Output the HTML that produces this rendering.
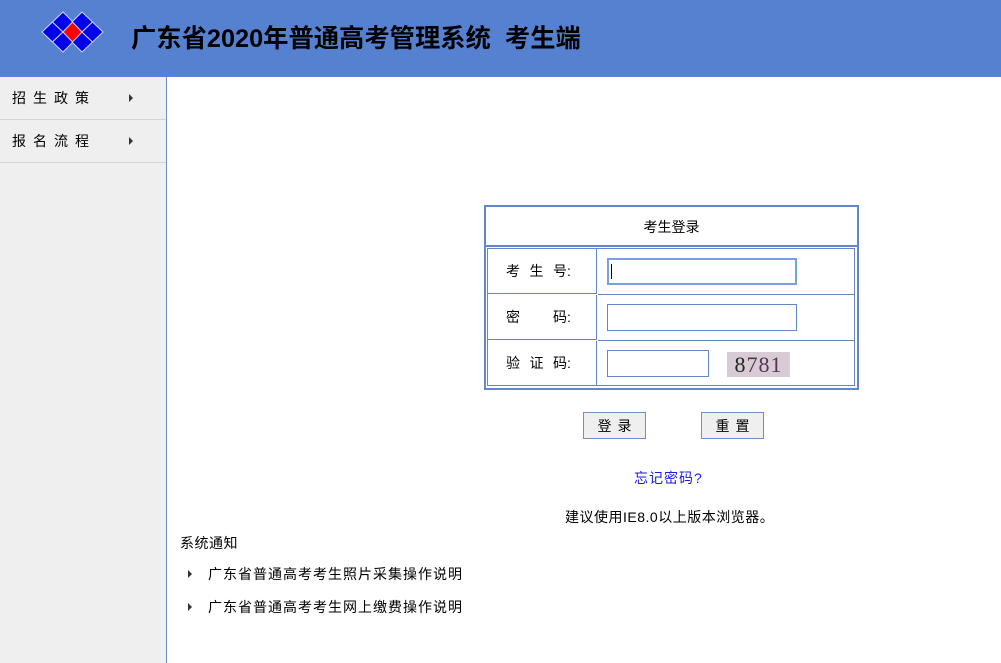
<!DOCTYPE html>
<html><head><meta charset="utf-8"><style>
body{margin:0;width:1001px;height:663px;overflow:hidden;background:#fff;font-family:"Liberation Sans","Noto Sans CJK SC",sans-serif;font-size:13px;color:#000;position:relative}
.hd{position:absolute;left:0;top:0;width:1001px;height:77px;background:#5581d0}
.hd .t{position:absolute;left:131px;top:19px;font-size:25.3px;font-weight:bold;color:#000;white-space:nowrap}
.sb{position:absolute;left:0;top:77px;width:166px;height:586px;background:#efefef;border-right:1px solid #6f8fc8}
.mi{height:42px;border-bottom:1px solid #d4d4d4;line-height:42px;padding-left:12px;letter-spacing:7px;font-size:14px;position:relative}
.mi:after{content:"";position:absolute;left:129px;top:17px;border-left:4px solid #333;border-top:4px solid transparent;border-bottom:4px solid transparent}
.box{position:absolute;left:484px;top:205px;width:371px;height:181px;border:2px solid #6286c8}
.ttl{position:absolute;left:0;top:0;width:371px;height:38px;border-bottom:2px solid #6286c8;text-align:center;line-height:40px;font-size:14px}
.in{position:absolute;left:1px;top:41px;width:366px;height:136px;border:1px solid #6286c8}
.lab{position:absolute;left:0;width:109px;height:45px;border-right:1px solid #6286c8;border-bottom:1px solid #6286c8;line-height:45px;font-size:14px;padding-left:18px;box-sizing:border-box;white-space:nowrap}
.lab i{display:inline-block;font-style:normal;width:23.5px}
.hl{position:absolute;left:110px;width:256px;border-top:1px solid #6286c8}
.ip{position:absolute;height:24px;border:1px solid #6286c8;box-sizing:border-box;background:#fff}
.btn{position:absolute;top:412px;width:63px;height:27px;border:1px solid #6f8fc8;background:#efefef;box-sizing:border-box;text-align:center;line-height:26px;font-size:14px;letter-spacing:6px;text-indent:6px}
.li{position:absolute;left:188px;font-size:14px;letter-spacing:1px}
.li:before{content:"";display:inline-block;border-left:4px solid #333;border-top:4px solid transparent;border-bottom:4px solid transparent;margin-right:16px;vertical-align:1px}
</style></head><body>
<div class="hd">
<svg width="120" height="60" style="position:absolute;left:0;top:1px">
<g stroke="#c8d4f0" stroke-width="1">
<polygon points="42,31 52.5,21 63,31 52.5,41" fill="#0000ee"/>
<polygon points="52.5,21 63,11 73,21 63,31" fill="#0000ee"/>
<polygon points="52.5,41 63,31 73,41 63,51" fill="#0000ee"/>
<polygon points="72,21 82,11 92.5,21 82,31" fill="#0000ee"/>
<polygon points="72,41 82,31 92.5,41 82,51" fill="#0000ee"/>
<polygon points="82,31 92.5,21 103,31 92.5,41" fill="#0000ee"/>
<polygon points="63,31 72.5,21 82,31 72.5,41" fill="#ff0000"/>
</g></svg>
<div class="t">广东省2020年普通高考管理系统&nbsp; 考生端</div>
</div>
<div class="sb"><div class="mi">招生政策</div><div class="mi">报名流程</div></div>
<div class="box">
<div class="ttl">考生登录</div>
<div class="in">
<div class="lab" style="top:0"><i>考</i><i>生</i>号:</div>
<div class="lab" style="top:46px"><i>密</i><i></i>码:</div>
<div class="lab" style="top:92px;height:44px;border-bottom:none"><i>验</i><i>证</i>码:</div>
<div class="hl" style="top:45px"></div>
<div class="hl" style="top:91px"></div>
<div class="ip" style="left:119px;top:9px;width:190px;height:27px;border:2px solid #7a9ee0"><div style="position:absolute;left:2px;top:4px;width:1px;height:15px;background:#000"></div></div>
<div class="ip" style="left:119px;top:55px;width:190px;height:27px"></div>
<div class="ip" style="left:119px;top:101px;width:102px;height:27px"></div>
<div style="position:absolute;left:239px;top:103px;width:63px;height:25px;background:#d8ccd4;font-family:'Liberation Serif',serif;font-size:22px;line-height:25px;text-align:center;color:#553355;letter-spacing:1px"><span style="color:#222">8</span>781</div>
</div></div>
<div class="btn" style="left:583px">登录</div>
<div class="btn" style="left:701px">重置</div>
<div style="position:absolute;left:634px;top:468px;color:#1a1ae0;font-size:14px;letter-spacing:1px">忘记密码?</div>
<div style="position:absolute;left:565px;top:507px;font-size:14px;letter-spacing:0.5px">建议使用IE8.0以上版本浏览器。</div>
<div style="position:absolute;left:180px;top:533px;font-size:14px;letter-spacing:0.5px">系统通知</div>
<div class="li" style="top:564px">广东省普通高考考生照片采集操作说明</div>
<div class="li" style="top:597px">广东省普通高考考生网上缴费操作说明</div>
</body></html>
